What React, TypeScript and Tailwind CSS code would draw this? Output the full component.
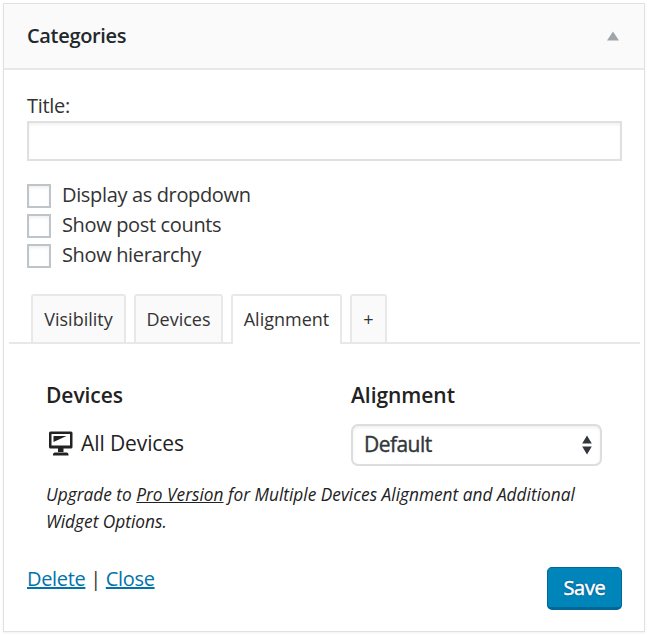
import React from "react";

const options = ["Display as dropdown", "Show post counts", "Show hierarchy"];

const tabBase =
  "flex h-[50px] items-center justify-center rounded-t-[3px] border-x-2 border-t-2 border-[#e8e8e8] text-[18px]";

function MonitorIcon() {
  return (
    <svg width="26" height="26" viewBox="0 0 26 26" fill="#222" className="shrink-0">
      <path
        fillRule="evenodd"
        d="M2.500 1.500h20.500A1.500 1.500 0 0 1 24.500 3v14A1.500 1.500 0 0 1 23 18.500h-20.500A1.500 1.500 0 0 1 1 17v-14A1.500 1.500 0 0 1 2.500 1.500zM3.500 4v11.500h18.500V4z"
      />
      <path d="M5.500 6H18.500L5.500 12zM10 18h5.500v4h-5.500zM5 25.500v-1q0-2 2-2h11.500q2 0 2 2v1z" />
    </svg>
  );
}

export default function App() {
  return (
    <div className="h-[635px] w-[650px] bg-white pl-[3px] pt-[3px] font-['Open_Sans',sans-serif] text-[20px] text-[#333]">
      <section className="h-[629px] w-[642px] border border-[#e1e1e1] shadow-[0_1px_2px_rgba(0,0,0,0.06)]">
        <header className="flex h-[66px] items-center justify-between border-b-2 border-[#e8e8e8] bg-[#fafafa] pl-[23px] pr-[25px]">
          <h1 className="text-[20px] font-semibold tracking-[-0.33px] text-[#23282d]">Categories</h1>
          <svg width="12" height="10" viewBox="0 0 12 10" fill="#a0a5aa">
            <path d="M6 0.500L12 9.500H0z" />
          </svg>
        </header>

        <div className="pl-[23px] pr-[22px] pt-[22px]">
          <label className="block h-[29px] leading-[28px] tracking-[-0.3px]">Title:</label>
          <input
            aria-label="Title"
            className="block h-10 w-full border-2 border-[#e0e0e0] bg-white shadow-[inset_0_2px_3px_rgba(0,0,0,0.05)] outline-none"
          />
          <div className="mt-[19px] flex flex-col">
            {options.map((option) => (
              <label key={option} className="flex h-[30px] items-center">
                <span className="mt-0.5 size-6 border-2 border-[#bfc4c8] bg-white shadow-[inset_0_2px_3px_rgba(0,0,0,0.06)]" />
                <span className="ml-[11px] leading-[28px] tracking-[-0.35px]">{option}</span>
              </label>
            ))}
          </div>
        </div>

        <nav className="ml-[5px] mr-1 mt-6 flex h-[50px] items-end">
          <span className="h-full w-[22px] border-b-2 border-[#e8e8e8]" />
          <span className={`${tabBase} w-[95px] border-b-2 bg-[#fafafa]`}>Visibility</span>
          <span className="h-full w-2 border-b-2 border-[#e8e8e8]" />
          <span className={`${tabBase} w-[89px] border-b-2 bg-[#fafafa]`}>Devices</span>
          <span className="h-full w-2 border-b-2 border-[#e8e8e8]" />
          <span className={`${tabBase} w-[111px] bg-white pb-0.5`}>Alignment</span>
          <span className="h-full w-2 border-b-2 border-[#e8e8e8]" />
          <span className={`${tabBase} w-[37px] border-b-2 bg-[#fafafa]`}>+</span>
          <span className="h-full flex-1 border-b-2 border-[#e8e8e8]" />
        </nav>

        <div className="pl-[42px] pr-[42px] pt-9 text-[#222]">
          <div className="flex">
            <div className="w-[305px]">
              <h2 className="h-[30px] text-[21px] font-semibold leading-[30px] tracking-[-0.05px]">Devices</h2>
              <div className="mt-[18px] flex h-[30px] items-center pl-[2px]">
                <MonitorIcon />
                <span className="ml-[7px] text-[21px] leading-[28px] tracking-[-0.1px]">All Devices</span>
              </div>
            </div>
            <div className="flex-1">
              <h2 className="h-[30px] text-[21px] font-semibold leading-[30px] tracking-[-0.05px]">Alignment</h2>
              <button className="mt-[14px] flex h-[42px] w-[251px] items-center justify-between rounded-[7px] border-2 border-[#ddd] bg-white pl-[11px] pr-[8px] text-[21px] tracking-[-0.55px] text-[#32373c] shadow-[inset_0_2px_3px_rgba(0,0,0,0.06)] [-webkit-text-stroke:0.4px_#32373c]">
                <span>Default</span>
                <svg width="10" height="20" viewBox="0 0 10 20" fill="#32373c">
                  <path d="M5 0.500L9.800 8.500H0.200zM5 19.500L0.200 11.500H9.800z" />
                </svg>
              </button>
            </div>
          </div>
          <p className="mt-[15px] whitespace-nowrap text-[17.3px] italic leading-[27px]">
            Upgrade to <a className="underline">Pro Version</a> for Multiple Devices Alignment and Additional
            <br />
            Widget Options.
          </p>
        </div>

        <footer className="mt-[31px] flex items-start justify-between pl-[23px] pr-[22px]">
          <div className="leading-[26px] tracking-[-0.33px]">
            <a className="text-[#0073aa] underline decoration-2">Delete</a>
            <span> | </span>
            <a className="text-[#0073aa] underline decoration-2">Close</a>
          </div>
          <button className="mt-px h-[43px] w-[75px] rounded-[5px] border border-b-[3px] border-[#006799] bg-[#0085ba] text-[20px] tracking-[-0.3px] text-white [-webkit-text-stroke:0.5px_#fff] [text-shadow:0_-1px_1px_#006799,1px_0_1px_#006799,0_1px_1px_#006799,-1px_0_1px_#006799]">
            Save
          </button>
        </footer>
      </section>
    </div>
  );
}
